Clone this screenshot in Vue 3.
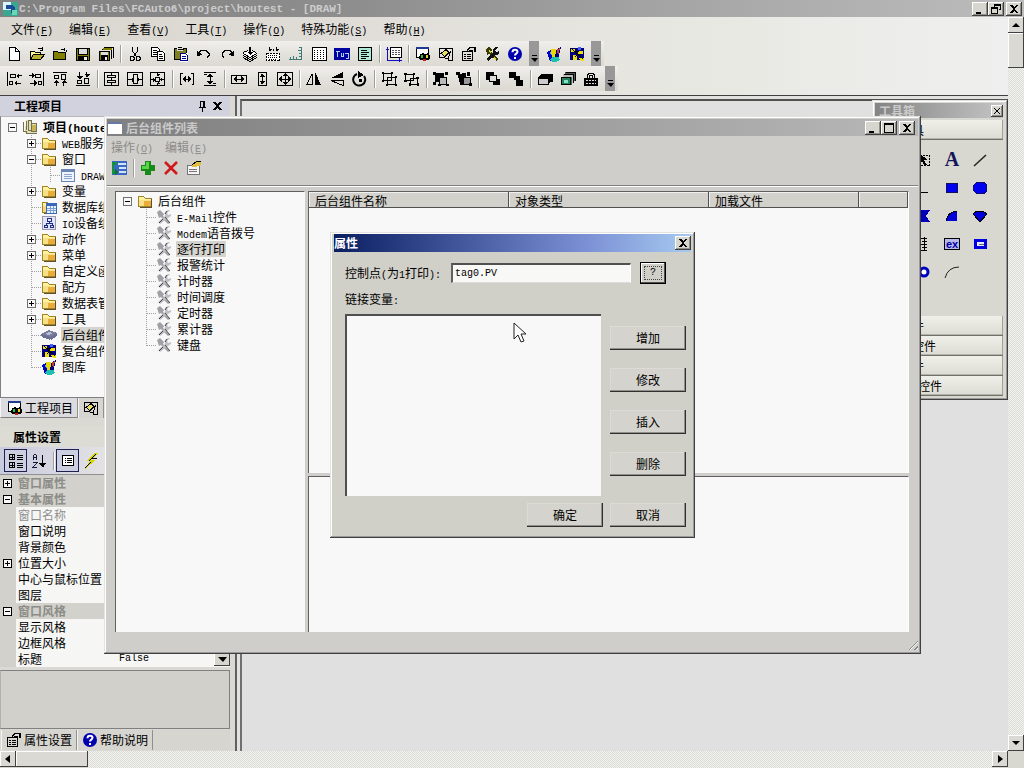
<script setup>
import { h, ref } from 'vue'

// Splits a caption into CJK and Latin runs, "&X" marks an underlined access key.
const Cap = (props) => {
  const runs = props.t.match(/[\x20-\x7e]+|[^\x20-\x7e]+/g) || []
  return h('span', { class: 'cap' }, runs.map((r) => {
    if (!/^[\x20-\x7e]/.test(r)) return r
    const i = r.indexOf('&')
    if (i < 0) return h('span', { class: 'latin' }, r)
    return h('span', { class: 'latin' }, [r.slice(0, i), h('u', r[i + 1]), r.slice(i + 2)])
  }))
}
Cap.props = ['t']

const k = (d, w = 1) => `<path d="${d}" fill="none" stroke="#000" stroke-width="${w}"/>`
const f = (d, c = '#000') => `<path d="${d}" fill="${c}"/>`
const folder = (a, b) => f('M1 3h5l2 2h7v9h-14z', '#a08426') + f('M2 4h4l2 2h6v1h-12z', '#fff3a0') + f('M2 7h12v6h-12z', a) + f('M7 8h7v5h-7z', b) + f('M14 6h1v9h-12v-1h11z', '#5c5030')
const hammer = (c, d) => f('M2 3l3-2 3 3-1 2 7 7-2 2-7-7-2 1z', c) + f('M14 1l-3 3 1 2 3-1v3l-3 1-8 6-2-2 7-6v-4l3-2z', d)
const help = '<circle cx="8" cy="8" r="7" fill="#0000b0" shape-rendering="auto"/><path d="M5.500 6.200q0-2.400 2.500-2.400t2.500 2q0 1.200-1.500 2-1 .6-1 1.800M8 11v2" fill="none" stroke="#fff" stroke-width="2" shape-rendering="auto"/>'
const gallery = f('M1 6l4-2 3 8-4 3z', '#0000c0') + f('M5 3h5v9h-4z', '#e6d800') + f('M10 4l5-3-3 12h-3z', '#000080') + f('M11 3l3-1-2 8z', '#c04040') + f('M6 11h7l1 3-4 2h-4l-2-2z', '#20c0b0') + f('M3 7l2-1 1 4z', '#60a0ff')
const composite = f('M1 2h14v12h-14z', '#000080') + f('M2 3h4v3h-4zM9 5h5v3h-5zM4 9h4v5h-4z', '#f0e000') + f('M1 3l13 9M10 12h5v3h-3z', '#f0e000') + k('M2 2l12 11M6 5h4M9 8l-3 3') + f('M9 1h3v3h-3z', '#4060ff')
const props = k('M1.500 5.500h10v9h-10zM3 8.500h2M6 8.500h4M3 10.500h2M6 10.500h4M3 12.500h2M6 12.500h4') + f('M6 4l4-3h3v3l-4 1z', '#ddd') + k('M6 4.500l3-3h4M8 5l4-1M13.500 1v5') + f('M14 1h1v5h-1z')

const icons = {
  new: f('M3 1h7l4 4v10h-11z', '#fff') + k('M3.500 1.500h6l4 4v9h-10zM9.500 1.500v4h4'),
  open: f('M1 5h4l1 1h6v3h-11z', '#fffb90') + f('M3 9h12l-4 5h-10z', '#b8b030') + k('M1.500 14V5.500h4l1 1h5v2M1.500 13.500l3-5h11l-4 5zM9 2.500h4M13.500 1v4M11 4.500h3'),
  close: f('M1 5h4l1 1h8v8h-13z', '#808000') + k('M1.500 5.500h4l1 1h7v7h-12zM9 3.500h3M12.500 2v3M14.500 4v2'),
  save: f('M1 2h14v13h-14z') + f('M2 3h1v11h-1zM13 3h1v11h-1zM3 9h10v1h-10z', '#808000') + f('M4 3h8v5h-8z', '#ddd') + f('M9 11h3v3h-3z', '#eee'),
  saveall: k('M5.500 1.500h10v10M3.500 3.500h10v9') + f('M5 2h9v2h-9z', '#808000') + f('M1 5h11v10h-11z') + f('M3 6h7v3h-7z', '#ddd') + f('M2 6h1v8h-1zM10 6h1v8h-1z', '#808000') + f('M7 11h2v3h-2z', '#eee'),
  cut: k('M5.500 1v4l4 6M10.500 1v4l-4 6') + k('M4 10.500h2l1 1v2l-1 1h-2l-1-1v-2zM10 10.500h2l1 1v2l-1 1h-2l-1-1v-2z'),
  copy: f('M1 1h8v10h-8z', '#fff') + k('M1.500 1.500h6l2 2v7h-8zM3 4.500h4M3 6.500h4M3 8.500h4') + f('M7 5h8v10h-8z', '#fff') + k('M7.500 5.500h5l2 2v7h-7zM9 8.500h3M9 10.500h4M9 12.500h4'),
  paste: f('M1 2h13v12h-13z', '#808020') + k('M1.500 2.500h12v11h-12z') + f('M4 1h6v4h-6z', '#ddd') + k('M4.500 3.500h6M5 1.500h4') + f('M7 7h8v9h-8z', '#fff') + '<path d="M7.500 7.500h5l2 2v5h-7zM9 10.500h4M9 12.500h4" fill="none" stroke="#000090"/>',
  undo: k('M3 8.500v-2l2-2h5l3 3v2l-2 2') + f('M1 5l6 4-6 1z'),
  redo: k('M13 8.500v-2l-2-2h-5l-3 3v2l2 2') + f('M15 5l-6 4 6 1z'),
  layers: f('M1 8l7-4 7 4-7 4z', '#fff') + k('M1 7.500l7 4 7-4M1 9.500l7 4 7-4M1 11.500l7 4 7-4M1 6.500l5-2M10 4.500l4 2') + f('M7 1h2v5h2l-3 3-3-3h2z'),
  keys: f('M1 7h14v8h-14z', '#fff') + '<path d="M1.500 7.500h13v7h-13z" fill="none" stroke="#000" stroke-dasharray="2 1"/><path d="M3 9.500h10M3 11.500h10M4 13.500h8" stroke="#000" stroke-dasharray="1 1"/>' + k('M4.500 1v4M8 1M11.500 1v4M8.500 3v2') + f('M3 3h4l-2 2zM10 3h4l-2 2z'),
  ruler: '<path d="M1 13.500h12M13.500 1v13M2.500 11v3M5.500 10v4M8.500 11v3M11 10.500h3M11 7.500h3M10 4.500h3M11 1.500h3" fill="none" stroke="#407878"/>',
  grid: f('M1 1h15v14h-15z', '#fff') + k('M1 1.500h14v13h-14z') + [4, 6, 8, 10, 12].map((y) => `<path d="M3 ${y}.500h11" stroke="#000" stroke-dasharray="1 2"/>`).join(''),
  tag: f('M0 2h16v12h-16z', '#0000a0') + '<path d="M1.500 5.500h4M3.500 5v6M7.500 7v3h2v-3M11 7.500h3v5h-2" fill="none" stroke="#a0d8ff"/>',
  script: f('M1 1h14v14h-14z', '#b0e8d8') + k('M1.500 1.500h13v13h-13zM4 4.500h6M4 6.500h8M4 8.500h6M4 10.500h8M4 12.500h5'),
  sheet: f('M4 1h12v11h-12z', '#fff') + k('M4.500 1.500h11v10h-11z') + '<path d="M6 4.500h8M6 6.500h8M6 8.500h8" stroke="#556" stroke-dasharray="2 1"/><path d="M1.500 1v13h14M0 3.500h3M13.500 12v4" fill="none" stroke="#1010c0"/>',
  project: f('M1 1h13v10h-13z', '#fff') + k('M1.500 1.500h12v9M1.500 1v10h4') + f('M1 1h13v2h-13z', '#223a90') + f('M5 8l3-1 2 2v3l-2 2h-3l-1-2z') + f('M6 9h2v3h-2z', '#20c040') + f('M10 8l3-1 2 3v3l-2 1h-3l-1-2z') + f('M11 9h2v3h-2z', '#e8d820') + f('M8 13h3v2h-3z', '#c02020'),
  find: k('M1.500 2.500h13v4M1.500 2v9h5') + f('M3 7l5-4 3 3-4 4z', '#e8e060') + k('M3 7.500l5-4 3 3-4 4zM13 5l-3 7h-3M10.500 12v2h4M14.500 7v7'),
  props,
  tools: hammer('#3a3a00', '#111') + f('M5 4l2 2-1 1-2-2zM10 11l2 2-1 1-2-2z', '#e0d820'),
  help, gallery, composite,
  alLeft: k('M1.500 1v14M4.500 3.500h5v3h-5zM3.500 10.500h3v3h-3z') + k('M11 4.500h5M9 12.500h6') + f('M10 5l3-3v5zM8 12l3-3v6z'),
  alRight: k('M14.500 1v14M6.500 3.500h5v3h-5zM9.500 10.500h3v3h-3z') + k('M0 4.500h5M1 12.500h6') + f('M6 5l-3-3v5zM8 12l-3-3v6z'),
  alTop: k('M1 1.500h14M2.500 4.500h4v3h-4zM9.500 3.500h4v5h-4zM4.500 9v6M11.500 10v5') + f('M1 12l3-3 4 3zM9 12l3-3 3 3z'),
  alBottom: k('M1 14.500h14M2.500 9.500h4v3h-4zM9.500 7.500h4v5h-4zM4.500 1v6M11.500 1v5') + f('M1 5h7l-3 3zM9 3h6l-3 3z'),
  cenH: k('M.5 1.500h14v13h-14zM3.500 4.500h8v2h-8zM3.500 9.500h8v2h-8zM7.500 6v4M7.500 1v3M7.500 12v3'),
  cenV: k('M.5 1.500h15v13h-15zM6.500 3.500h4v9h-4zM1 8.500h5M11 8.500h5') + f('M5 6v5l2-2zM12 6v5l-2-2z'),
  cenB: k('M.5 1.500h14v13h-14zM5.500 6.500h4v4h-4zM7.500 1v4M7.500 12v3M1 8.500h4M11 8.500h4') + f('M6 3h4l-2 2zM6 13h4l-2-2zM3 6v5l2-2zM12 6v5l-2-2z'),
  spH: k('M1.500 2v12M14.500 2v12M1 2.500h3M12 2.500h3M1 13.500h2M13 13.500h2M4 8.500h8') + f('M3 8l4-3v6zM13 8l-4-3v6z'),
  spV: k('M2 1.500h12M2 14.500h12M8.500 3v10M2 3.500h3M11 12.500h3') + f('M8 2l3 4h-6zM8 14l3-4h-6z'),
  szW: k('M.5 4.500h15v8h-15zM3 8.500h10') + f('M2 8l4-3v6zM14 8l-4-3v6z'),
  szH: k('M4.500 1.500h8v13h-8zM8.500 3v10') + f('M8 2l3 4h-5zM8 14l3-4h-5z'),
  szB: k('M.5 1.500h15v13h-15zM3 8.500h10M8.500 3v10') + f('M8 2l3 3h-5zM8 14l3-3h-5zM1 8l4-3v6zM15 8l-4-3v6z'),
  flipH: k('M1 13.500h5V3z') + f('M9 1l6 13h-6z'),
  flipV: f('M14 7V1L2 7z') + k('M2 9.500h12v5z'),
  rotate: '<path d="M5 3a6 6 0 1 0 7 2" fill="none" stroke="#000" stroke-width="2" shape-rendering="auto"/>' + f('M6 0l6 4-6 3zM7 8h3v3h-3z'),
  group: k('M2.500 2.500h8v7h-8zM6.500 6.500h8v7h-8z') + f('M1 1h2v2h-2zM10 1h2v2h-2zM1 9h2v2h-2zM14 5h2v2h-2zM5 13h2v2h-2zM14 13h2v2h-2z'),
  ungroup: k('M1.500 3.500h8v6h-8zM6.500 7.500h7v6h-7z') + f('M0 2h3v2h-3zM9 2h2v2h-2zM0 9h3v2h-3zM12 6h3v2h-3zM5 12h2v3h-2zM13 12h2v3h-2z'),
  combine: f('M2 2h9v9h-9z') + f('M6 6h8v8h-8z', '#bbb') + k('M6.500 6.500h7v7h-7z') + f('M0 1h3v3h-3zM12 1h3v3h-3zM0 11h3v3h-3zM13 13h3v2h-3zM5 13h3v2h-3z'),
  split: f('M2 3l8-1 1 8-8 1z') + f('M8 7h6v6h-6z', '#999') + k('M7.500 6.500h7v7h-7z') + f('M0 1h4v3h-4zM11 1h3v4h-3zM4 11h4v3h-4zM13 12h3v3h-3z'),
  front: f('M1 1h8v8h-8zM8 8h7v6h-7z') + f('M4 4h8v7h-8z', '#ddd') + k('M4.500 4.500h7v6h-7z'),
  back: f('M1 1h7v6h-7zM8 9h7v6h-7z') + f('M6 5h6v6h-6z', '#000') + f('M5 9h3v2h-3z', '#ddd'),
  stack: f('M4 3h12v8h-3l-1 3h-11V7z') + f('M2 8h9v5h-9z', '#ccc') + k('M4 4.500h11'),
  stackG: f('M5 1h11v9h-11z', '#555') + k('M5.500 1.500h10v8') + f('M3 3h10v9h-10z', '#bbb') + k('M3.500 3.500h10v8') + f('M1 6h11v8h-11z', '#208060') + k('M1.500 6.500h9v7h-9z') + f('M4 9h4v3h-4z', '#80e0c0'),
  lock: k('M4.500 8V4l2-2h3l2 2v4') + k('M6.500 7V4h3v3') + f('M1 7h14v8h-14z') + '<path d="M3 9.500h10M3 12.500h10" stroke="#ddd" stroke-dasharray="2 1"/>',
  folder: folder('#f8e088', '#e8ac38'),
  root: f('M4 1h5v3h6v10h-12z', '#e6dfa8') + f('M9 6h5v7h-5z', '#c8b458') + '<path d="M4.500 2v9M6.500 1.500h3v10h-3zM9.500 4.500h5v8h-5zM1 12.500h3v2h11M1.500 3v10" fill="none" stroke="#70705c"/>',
  form: f('M1 2h14v13h-14z', '#6b85b5') + f('M2 5h12v9h-12z', '#eef4ff') + '<path d="M4 7.500h8M4 9.500h8M4 11.500h8" stroke="#8fa5c8"/>',
  db: folder('#f4d880', '#f0c860') + f('M5 4h11v11h-11z', '#3968b8') + f('M6 7h9v7h-9z', '#e8f2ff') + '<path d="M6 9.500h9M6 11.500h9M9.500 7v7M12.500 7v7" stroke="#7c9fd0"/>',
  io: f('M1 1h14v14h-14z', '#dfe4f8') + '<path d="M1.500 1.500h13v13h-13z" fill="none" stroke="#99a"/>' + '<path d="M6.500 3.500h4v3h-4zM3.500 10.500h3v2h-3zM9.500 10.500h3v2h-3zM8.500 7v2M5 10v-1.500h6v1.500" fill="none" stroke="#203080"/>',
  chip: f('M0 7l8-4 8 3-7 4z', '#777c9c') + f('M0 7l9 3v3l-8-3zM9 10l7-4v3l-6 4z', '#6c6f92') + f('M4 7l4-2 4 1-4 2z', '#b8bcd8'),
  tool: '<g shape-rendering="auto">' + f('M1 3l3-2 4 4-1 2 7 7-2 1-7-7-2 1z', '#a0a0a6') + f('M14 1l-3 3 1 2 3-1v2l-3 2-8 6-2-2 7-6v-4l3-2z', '#c0c0c4') + '<path d="M3 14l4-4M9 8l5 6M9 5l2-3" fill="none" stroke="#444"/></g>',
  tree: f('M1 1h15v14h-15z', '#3a68c0') + f('M7 3h8v2h-8zM8 7h7v2h-7zM8 11h7v2h-7z', '#d0e4ff') + f('M1 2h5v3h-3v6h3v3h-5z', '#109040') + f('M4 9l4 3-4 3z', '#107030'),
  plus: f('M5 1h6v4h4v6h-4v4h-6v-4h-4v-6h4z', '#178a17') + f('M6 2h3v4h-3zM2 6h7v3h-7z', '#56d44a'),
  cross: '<path d="M2 2l12 12M14 2L2 14" stroke="#d01818" stroke-width="2.500" shape-rendering="auto"/>',
  edit: f('M1 5h12v10h-12z', '#f4f4f4') + '<path d="M1.500 5.500h12v9h-12zM3 9.500h8M3 11.500h8" fill="none" stroke="#777"/>' + f('M6 4l4-3h5v4l-5 2h-4z', '#e0c040') + k('M6.500 4.500l4-3h4'),
  cat: k('M1.500 1.500h5v5h-5zM1.500 9.500h5v5h-5zM4.500 2v4M2 4.500h5M4.500 10v4M2 12.500h5M9 2.500h6M9 4.500h6M9 6.500h6M9 10.500h6M9 12.500h6M9 14.500h6'),
  sort: '<path d="M2.500 7V3l1-2h1l1 2v4M2.500 4.500h3M2 9.500h4l-4 5h4" fill="none" stroke="#181838"/>' + k('M11.500 2v10') + f('M8 10h7l-3 5z'),
  list: f('M2 2h12v11h-12z', '#fff') + k('M2.500 2.500h11v10h-11zM5 5.500h1M7 5.500h5M5 7.500h1M7 7.500h5M5 9.500h1M7 9.500h5'),
  bolt: f('M12 0l-9 8h4l-5 8 11-9h-4l6-7z', '#d8d800') + k('M13 1l-7 7M14 5.500h-5M8 9l-6 6'),
  app: f('M0 1h15v14h-15z', '#3aa890') + f('M0 1h8v8h-8z', '#d8f4ff') + f('M3 4h6l3 3v5h-4v-4h-5z', '#1c4a9a') + f('M9 9h5v5h-5z', '#67d8b8'),
  win: f('M0 2h14v12h-14z', '#fff') + f('M0 2h14v2h-14z', '#6878a0'),
  pick: '<path d="M3.500 3.500h10v10h-10z" fill="none" stroke="#000" stroke-dasharray="2 1"/>' + f('M3 1v11l3-3 3 5 2-1-3-5h4z'),
  letter: '<text x="8" y="14" text-anchor="middle" font-family="Liberation Serif, serif" font-weight="bold" font-size="20" fill="#15155c">A</text>',
  line: '<path d="M2 14L14 3" stroke="#222" stroke-width="1.500" shape-rendering="auto"/>',
  hline: k('M0 12.500h12'),
  rect: f('M2 3h12v10h-12z', '#10105c') + f('M3 4h10v8h-10z', '#0000f0'),
  rrect: f('M4 2h8l3 3v6l-3 3h-8l-3-3v-6z', '#10106c') + f('M4 3h8l2 2v6l-2 2h-8l-2-2v-6z', '#0000f0'),
  poly: f('M0 2h14l-4 6 4 6h-14z', '#0000b8'),
  quarter: f('M2 13q0-9 11-10v10z', '#0000d8') + k('M2.500 13q0-9 11-10'),
  fan: f('M1 6l4-3h6l4 3-7 8z', '#0000d8') + k('M1 6l4-3h6l4 3-7 8z'),
  scale: k('M8.500 1v14M3 2.500h8M6 5.500h5M3 8.500h8M6 11.500h5M3 14.500h8'),
  ex: f('M0 2h16v12h-16z', '#b8b8ec') + k('M.5 2.500h15v11h-15z') + '<text x="8" y="12" text-anchor="middle" font-family="Liberation Sans, sans-serif" font-weight="bold" font-size="11" fill="#0000a0">ex</text>',
  btn: f('M2 3h13v10h-13z', '#0000e0') + f('M5 6h7v4h-7z', '#e8e8ff') + f('M7 8h5v1h-5z', '#666'),
  ring: '<circle cx="8" cy="8" r="4" fill="#fff" stroke="#0000c0" stroke-width="3" shape-rendering="auto"/>',
  arc: '<path d="M1 14Q4 3 15 3" fill="none" stroke="#222" shape-rendering="auto"/>',
  blank: '',
}
const Ico = (p) => h('svg', { class: 'ico', viewBox: '0 0 16 16', width: 16, height: 16, 'shape-rendering': 'crispEdges', 'aria-hidden': 'true', innerHTML: icons[p.n] })
Ico.props = ['n']

const menus = ['文件(&F)', '编辑(&E)', '查看(&V)', '工具(&T)', '操作(&O)', '特殊功能(&S)', '帮助(&H)']
const bar1 = 'new open close save saveall | cut copy paste undo redo layers keys ruler grid tag script | sheet | project find props tools help > gallery composite >'.split(' ')
const bar2 = 'alLeft alRight alTop alBottom | cenH cenV cenB | spH spV | szW szH szB | flipH flipV rotate | group ungroup | combine split | front back | stack stackG lock >'.split(' ')

// e: expander sign, d: depth, i: icon
const projectTree = [
  { d: 0, e: '-', i: 'root', t: '项目(houtest)', bold: true },
  { d: 1, e: '+', i: 'folder', t: 'WEB服务' },
  { d: 1, e: '-', i: 'folder', t: '窗口' },
  { d: 2, i: 'form', t: 'DRAW' },
  { d: 1, e: '+', i: 'folder', t: '变量' },
  { d: 1, i: 'db', t: '数据库组' },
  { d: 1, i: 'io', t: 'IO设备组' },
  { d: 1, e: '+', i: 'folder', t: '动作' },
  { d: 1, e: '+', i: 'folder', t: '菜单' },
  { d: 1, i: 'folder', t: '自定义函数' },
  { d: 1, i: 'folder', t: '配方' },
  { d: 1, e: '+', i: 'folder', t: '数据表管理' },
  { d: 1, e: '+', i: 'folder', t: '工具' },
  { d: 1, i: 'chip', t: '后台组件', sel: true },
  { d: 1, i: 'composite', t: '复合组件' },
  { d: 1, i: 'gallery', t: '图库', last: true },
]
const componentTree = [
  { d: 0, e: '-', i: 'folder', t: '后台组件' },
  ...['E-Mail控件', 'Modem语音拨号', '逐行打印', '报警统计', '计时器', '时间调度', '定时器', '累计器', '键盘'].map((t, n) => ({ d: 1, i: 'tool', t, sel: n === 2, last: n === 8 })),
]
const grid = [
  { t: '窗口属性', e: '+', cat: true }, { t: '基本属性', e: '-', cat: true },
  { t: '窗口名称', off: true }, { t: '窗口说明' }, { t: '背景颜色' }, { t: '位置大小', e: '+' },
  { t: '中心与鼠标位置' }, { t: '图层' }, { t: '窗口风格', e: '-', cat: true },
  { t: '显示风格' }, { t: '边框风格' }, { t: '标题', v: true },
]
const shapes = ['pick', 'letter', 'line', 'hline', 'rect', 'rrect', 'poly', 'quarter', 'fan', 'scale', 'ex', 'btn', 'ring', 'arc', 'blank']
const columns = ['后台组件名称', '对象类型', '加载文件', '']
const point = ref('tag0.PV')
</script>

<template>
  <div class="screen">
    <header class="titlebar main-title">
      <Ico n="app" />
      <span class="main-caption">C:\Program Files\FCAuto6\project\houtest - [DRAW]</span>
      <div class="winbtns">
        <button class="wb" aria-label="最小化"><svg viewBox="0 0 12 10"><path d="M2 8h5v2h-5z" /></svg></button>
        <button class="wb" aria-label="还原"><svg viewBox="0 0 12 10"><path d="M4 0h7v6h-2v-1h1v-3h-5v1h-1zM1 3h7v7h-7zM2 5v4h5v-4z" fill-rule="evenodd" /></svg></button>
        <button class="wb gap" aria-label="关闭"><svg viewBox="0 0 12 10"><path d="M2 1h2l2 2 2-2h2l-3 4 3 4h-2l-2-2-2 2h-2l3-4z" /></svg></button>
      </div>
    </header>

    <div class="work">
      <div class="frame">
        <div class="chrome">
          <nav class="menubar"><button v-for="m in menus" :key="m"><Cap :t="m" /></button></nav>
          <div v-for="(bar, b) in [bar1, bar2]" :key="b" class="toolbar">
            <template v-for="(n, i) in bar" :key="i">
              <span v-if="n === '|'" class="sep"></span>
              <button v-else-if="n === '>'" class="more" aria-label="更多"><svg viewBox="0 0 9 8"><path d="M2 0h5v1h-5zM1 3h7l-3 4z" /></svg></button>
              <button v-else class="tb" :aria-label="n"><Ico :n="n" /></button>
            </template>
          </div>
        </div>

        <div class="body">
          <aside class="dock">
            <div class="dock-head lilac"><Cap t="工程项目" />
              <svg class="pins" viewBox="0 0 30 12" shape-rendering="crispEdges"><path d="M8 1h5v6h1v1h-3v4h-1v-4h-3v-1h1zM9 2v5h2v-5z" fill-rule="evenodd" /><path d="M22 2l7 8M29 2l-7 8" stroke="#000" stroke-width="2" /></svg>
            </div>
            <ul class="tree project">
              <li v-for="r in projectTree" :key="r.t" :class="{ last: r.last, sel: r.sel, bold: r.bold }">
                <span v-for="n in r.d + 1" :key="n" class="cell" :class="{ end: n === r.d + 1, first: n === 1, on: n === 2 }"><b v-if="r.e && n === r.d + 1" class="exp" :class="{ plus: r.e === '+' }"></b></span>
                <Ico :n="r.i" /><Cap :t="r.t" />
              </li>
            </ul>
            <div class="tabs"><button class="on"><Ico n="project" /><Cap t="工程项目" /></button><button><Ico n="find" /></button></div>
            <div class="dock-head lower"><Cap t="属性设置" /></div>
            <div class="prop-tools">
              <button class="on" aria-label="分类"><Ico n="cat" /></button><button aria-label="排序"><Ico n="sort" /></button><span class="sep"></span>
              <button class="on" aria-label="属性"><Ico n="list" /></button><button aria-label="事件"><Ico n="bolt" /></button>
            </div>
            <table class="props">
              <tbody>
                <tr v-for="g in grid" :key="g.t" :class="{ cat: g.cat, off: g.off }">
                  <td class="gut"><b v-if="g.e" class="exp" :class="{ plus: g.e === '+' }"></b></td>
                  <th scope="row">{{ g.t }}</th>
                  <td class="val">
                    <div v-if="g.v" class="combo">
                      <select aria-label="标题"><option>False</option><option>True</option></select>
                      <span class="arrow"><svg viewBox="0 0 9 6" width="9" height="6"><path d="M0 1h9l-4 5z" /></svg></span>
                    </div>
                  </td>
                </tr>
              </tbody>
            </table>
            <div class="hint"></div>
            <div class="tabs foot"><button><Ico n="props" /><Cap t="属性设置" /></button><button><Ico n="help" /><Cap t="帮助说明" /></button></div>
          </aside>
          <main class="mdi"><div class="canvas"></div></main>
        </div>

        <div class="hscroll">
          <button aria-label="向左"><svg viewBox="0 0 8 8"><path d="M6 0v8l-5-4z" /></svg></button><span class="thumb"></span><span class="track"></span>
          <button aria-label="向右"><svg viewBox="0 0 8 8"><path d="M2 0v8l5-4z" /></svg></button>
        </div>
      </div>
      <div class="vscroll">
        <button aria-label="向上"><svg viewBox="0 0 8 8"><path d="M0 6h8l-4-4z" /></svg></button><span class="thumb"></span><span class="track"></span>
        <button aria-label="向下"><svg viewBox="0 0 8 8"><path d="M0 2h8l-4 4z" /></svg></button><span class="corner"></span>
      </div>
    </div>

    <section class="window toolbox">
      <div class="titlebar"><span class="inactive">工具箱</span><button class="wb" aria-label="关闭"><svg viewBox="0 0 12 10"><path d="M2 1h1l3 3 3-3h1l-3 4 3 4h-1l-3-3-3 3h-1l3-4z" /></svg></button></div>
      <button class="drawer"><Cap t="常用工具" /></button>
      <div class="shapes"><button v-for="s in shapes" :key="s" :aria-label="s"><Ico :n="s" /></button></div>
      <button v-for="t in ['图表控件', 'Active控件', '报表控件', 'Windows控件']" :key="t" class="drawer"><Cap :t="t" /></button>
    </section>

    <section class="window components">
      <div class="titlebar"><Ico n="win" /><span class="inactive">后台组件列表</span>
        <div class="winbtns">
          <button class="wb" aria-label="最小化"><svg viewBox="0 0 12 10"><path d="M2 8h5v2h-5z" /></svg></button>
          <button class="wb" aria-label="最大化"><svg viewBox="0 0 12 10"><path d="M1 0h10v10h-10zM2 2v7h8v-7z" fill-rule="evenodd" /></svg></button>
          <button class="wb gap" aria-label="关闭"><svg viewBox="0 0 12 10"><path d="M2 1h2l2 2 2-2h2l-3 4 3 4h-2l-2-2-2 2h-2l3-4z" /></svg></button>
        </div>
      </div>
      <nav class="submenu"><button><Cap t="操作(&O)" /></button><button><Cap t="编辑(&E)" /></button></nav>
      <div class="subtools">
        <button aria-label="列表"><Ico n="tree" /></button><span class="sep"></span>
        <button aria-label="增加"><Ico n="plus" /></button><button aria-label="删除"><Ico n="cross" /></button><button aria-label="属性"><Ico n="edit" /></button>
      </div>
      <div class="panes">
        <ul class="tree comp">
          <li v-for="r in componentTree" :key="r.t" :class="{ last: r.last, sel: r.sel }">
            <span v-for="n in r.d + 1" :key="n" class="cell" :class="{ end: n === r.d + 1, first: n === 1 }"><b v-if="r.e && n === r.d + 1" class="exp"></b></span>
            <Ico :n="r.i" /><Cap :t="r.t" />
          </li>
        </ul>
        <div class="right">
          <div class="listview"><table><thead><tr><th v-for="c in columns" :key="c" scope="col">{{ c }}</th></tr></thead></table></div>
          <div class="detail"></div>
        </div>
      </div>
      <div class="grip"></div>
    </section>

    <section class="window dialog" role="dialog" aria-label="属性">
      <div class="titlebar"><span>属性</span><button class="wb" aria-label="关闭"><svg viewBox="0 0 12 10"><path d="M2 1h2l2 2 2-2h2l-3 4 3 4h-2l-2-2-2 2h-2l3-4z" /></svg></button></div>
      <form class="form" @submit.prevent>
        <div class="line"><label for="point"><Cap t="控制点(为1打印):" /></label><input id="point" v-model="point" type="text" /><button type="button" class="q"><span>?</span></button></div>
        <span id="vars" class="vars"><Cap t="链接变量:" /></span>
        <div class="cols">
          <div class="listbox" role="listbox" aria-labelledby="vars" tabindex="0"></div>
          <div class="side"><button v-for="t in ['增加', '修改', '插入', '删除']" :key="t" type="button" class="push">{{ t }}</button></div>
        </div>
        <div class="actions"><button class="push">确定</button><button type="button" class="push">取消</button></div>
      </form>
    </section>

    <svg class="pointer" viewBox="0 0 14 22" width="14" height="22"><path d="M1 1v16l4-4 3 7 3-1-3-7h5z" fill="#fff" stroke="#222" /></svg>
  </div>
</template>

<style>
html, body { margin: 0; overflow: hidden; }
.cap { white-space: nowrap; }
.latin { font-family: "Liberation Mono", monospace; font-size: 10px; line-height: 10px; }
.ico { display: block; flex: none; }
</style>

<style scoped>
.screen { position: relative; display: flex; flex-direction: column; height: 100vh; overflow: hidden; background: #d6d5ce; color: #000; font: 12px/16px "Noto Sans CJK SC", sans-serif; }
button { margin: 0; padding: 0; border: 0; background: none; color: inherit; font: inherit; display: flex; align-items: center; }
.titlebar { display: flex; align-items: center; }
.titlebar > .winbtns, .titlebar > .wb { margin-left: auto; }
.winbtns { display: flex; }
.wb { width: 16px; height: 14px; justify-content: center; background: #d6d5ce; box-shadow: inset -1px -1px #404040, inset 1px 1px #fff, inset -2px -2px #909088; }
.wb svg { width: 12px; height: 10px; shape-rendering: crispEdges; }
.wb.gap { margin-left: 2px; }
.inactive { color: #cacaca; font-weight: bold; }

.main-title { flex: none; height: 17px; padding: 0 2px 0 3px; background: linear-gradient(90deg, #808080, #8e8e8e 35%, #a8a8a8 70%, #bcbcbc); }
.main-caption { color: #cccccc; font: bold 11px/16px "Liberation Mono", monospace; white-space: pre; }

.work { flex: 1; min-height: 0; display: flex; }
.frame { flex: 1; min-width: 0; display: flex; flex-direction: column; }
.chrome { flex: none; background: linear-gradient(90deg, #d8d6ce, #e0ddd8 35%, #e8e8e2 70%, #efefef); border-bottom: 1px solid #404040; padding-bottom: 4px; }
.menubar { display: flex; height: 24px; padding-left: 11px; gap: 16px; }
.toolbar { display: flex; align-items: center; height: 25px; padding-left: 2px; width: max-content; background: linear-gradient(#f0efec, #e2e0da 60%, #dbd9d2); }
.tb { width: 23px; height: 22px; justify-content: center; }
.sep { flex: none; width: 1px; height: 18px; margin: 0 2px 0 3px; background: #a0a098; box-shadow: 1px 0 #fff; }
.more { width: 10px; height: 25px; margin: 0 3px; background: #989898; justify-content: center; align-items: flex-end; padding-bottom: 3px; }
.more svg { width: 9px; height: 8px; }

.body { flex: 1; min-height: 0; display: flex; }
.dock { width: 230px; flex: none; padding-right: 5px; display: flex; flex-direction: column; background: #dad9d3; }
.dock-head { flex: none; height: 20px; line-height: 20px; padding: 0 8px 0 14px; font-weight: bold; display: flex; align-items: center; justify-content: space-between; }
.lilac { background: #d2d2de; }
.pins { width: 30px; height: 12px; }
.lower { margin-top: 7px; padding-left: 13px; background: #dddcd4; }
.tree { list-style: none; margin: 0; background: #f8f8f8; }
.project { flex: 1; min-height: 0; overflow: hidden; padding: 2px 0 0 2px; border-left: 1px solid #808080; border-top: 1px solid #b8b8b8; border-bottom: 1px solid #808080; }
.tree li { display: flex; align-items: center; height: 16px; }
.tree li .cap { height: 16px; padding: 0 1px; margin-left: 4px; line-height: 16px; }
.sel .cap { background: #d4d3cd; }
.bold { font-weight: bold; }
.bold :deep(.latin) { font-size: 11px; }
.cell { flex: none; position: relative; width: 19px; height: 16px; }
.cell.end:not(.first) { background: repeating-linear-gradient(90deg, #a0a0a0 0 1px, transparent 1px 2px) 10px 8px / 9px 1px no-repeat, repeating-linear-gradient(#a0a0a0 0 1px, transparent 1px 2px) 9px 0 / 1px 16px no-repeat; }
.cell.on:not(.end) { background: repeating-linear-gradient(#a0a0a0 0 1px, transparent 1px 2px) 9px 0 / 1px 16px no-repeat; }
.last .cell.end:not(.first) { background-size: 9px 1px, 1px 9px; }
.exp { position: absolute; left: 5px; top: 4px; width: 9px; height: 9px; box-sizing: border-box; border: 1px solid #707070; background: linear-gradient(#000, #000) 1px 3px / 5px 1px no-repeat, #f8f8f8; }
.exp.plus { background: linear-gradient(#000, #000) 1px 3px / 5px 1px no-repeat, linear-gradient(#000, #000) 3px 1px / 1px 5px no-repeat, #f8f8f8; }
.tabs { flex: none; display: flex; height: 20px; margin-bottom: 2px; background: #d6d5d0; }
.tabs button { gap: 2px; padding: 0 4px; border-right: 1px solid #909090; border-left: 1px solid #f4f4f4; }
.tabs button.on { padding-left: 6px; background: #dcdbe0; border-bottom: 1px solid #808080; }
.prop-tools { flex: none; display: flex; align-items: center; height: 27px; padding-left: 4px; background: linear-gradient(90deg, #c8cade, #ebe9e6 60%); border-bottom: 1px solid #909090; }
.prop-tools button { width: 23px; height: 23px; box-sizing: border-box; justify-content: center; }
.prop-tools .on { border: 1px solid #202050; background: #cccfe0; }
.props { flex: none; width: 100%; border-collapse: collapse; table-layout: fixed; background: #f6f6f4; }
.props td, .props th { height: 16px; padding: 0; line-height: 16px; white-space: nowrap; }
.props th { width: 100px; padding-left: 2px; box-sizing: border-box; font-weight: normal; text-align: left; }
.props .gut { width: 16px; position: relative; background: #d2d1cb; }
.gut .exp { left: 3px; border-color: #000; }
.cat { background: #d2d1cb; }
.cat th { color: #8c8c88; font-weight: bold; }
.off th { color: #909090; }
.combo { display: flex; height: 14px; margin: 1px 0; }
.combo select { flex: 1; min-width: 0; height: 14px; padding: 0 0 0 3px; border: 0; appearance: none; background: transparent; font: 10px/14px "Liberation Mono", monospace; color: #000; }
.arrow { width: 16px; display: flex; align-items: center; justify-content: center; background: #d6d5ce; box-shadow: inset -1px -1px #404040, inset 1px 1px #fff; pointer-events: none; }
.hint { flex: none; height: 57px; margin-top: 3px; background: #d1d0ca; border: 1px solid #808080; border-left-color: #b0b0b0; }
.foot { height: 20px; margin: 1px 0 1px 1px; }
.mdi { flex: 1; min-width: 0; padding: 3px 0 0 3px; background: #e2e2e0; border-left: 2px solid #606060; }
.canvas { height: 100%; box-sizing: border-box; background: #e0e0e0; border-top: 2px solid #505050; border-left: 2px solid #707070; }

.hscroll, .vscroll { flex: none; display: flex; }
.vscroll { flex-direction: column; width: 16px; }
.hscroll { height: 17px; }
.hscroll button, .vscroll button, .thumb { flex: none; width: 16px; height: 16px; justify-content: center; background: #dad9d3; box-shadow: inset -1px -1px #404040, inset 1px 1px #fff; }
.hscroll svg, .vscroll svg { width: 8px; height: 8px; }
.hscroll .thumb { width: 72px; }
.vscroll .thumb { height: 35px; }
.track { flex: 1; background: repeating-conic-gradient(#dcdcd6 0 25%, #f2f2ee 0 50%) 0 0 / 2px 2px; }
.corner { height: 17px; background: #d8d7d0; }

.window { position: absolute; box-sizing: border-box; display: flex; flex-direction: column; background: #d2d1cb; box-shadow: inset -1px -1px #404040, inset 1px 1px #e2e2de, inset -2px -2px #999, inset 2px 2px #fff; }
.toolbox { left: 872px; top: 100px; width: 136px; height: 300px; padding: 3px 5px 4px 3px; background: #d8d8d0; }
.toolbox .titlebar { height: 15px; margin-bottom: 2px; padding-left: 4px; background: linear-gradient(90deg, #848484, #c4c4c4); }
.toolbox .titlebar .wb { width: 12px; height: 12px; }
.toolbox .titlebar .wb svg { width: 10px; height: 8px; }
.drawer { flex: none; height: 20px; box-sizing: border-box; padding-left: 1px; background: linear-gradient(#f0f0ea, #dcdbd3); border-bottom: 1px solid #707068; box-shadow: inset -1px 0 #a0a098, inset 0 -1px #b4b3ac; }
.shapes { flex: 1; display: grid; grid-template-columns: repeat(3, 28px); grid-auto-rows: 28px; align-content: start; padding: 6px 0 0 35px; }
.shapes button { justify-content: center; }

.components { left: 104px; top: 116px; width: 817px; height: 538px; padding: 3px; background: #cfceca; }
.components > .titlebar { flex: none; height: 17px; padding: 0 3px 0 1px; background: linear-gradient(90deg, #808080, #949494 40%, #b8b8b8); }
.components > .titlebar .inactive { margin-left: 2px; }
.submenu { flex: none; display: flex; gap: 12px; height: 22px; padding-left: 4px; color: #8c8c88; }
.subtools { flex: none; display: flex; align-items: center; height: 28px; margin-bottom: 5px; padding: 0; box-sizing: border-box; border-bottom: 1px solid #808080; box-shadow: 0 1px #fff; }
.subtools button { width: 23px; justify-content: center; padding-bottom: 8px; }
.subtools .sep { margin: 0 2px 8px 3px; }
.panes { flex: 1; min-height: 0; display: flex; gap: 3px; margin: 0 9px 0 8px; }
.comp { width: 186px; flex: none; padding: 1px 0 0 2px; box-sizing: content-box; border: 1px solid #606060; border-width: 1px 0 0 1px; border-right: 1px solid #f8f8f8; background: #f8f8f8; }
.right { flex: 1; min-width: 0; display: grid; grid-template-rows: 281fr 155fr; gap: 3px; }
.listview, .detail { background: #f8f8f8; border: 1px solid #606060; border-right: 1px solid #fff; border-bottom: 0; min-height: 0; }
.listview table { width: 100%; table-layout: fixed; border-collapse: separate; border-spacing: 0; }
.listview th { height: 16px; padding: 0 0 0 6px; font-weight: normal; text-align: left; line-height: 15px; background: #d2d1cb; box-shadow: inset -1px -1px #505050, inset 1px 1px #f0f0f0; }
.listview th:nth-child(-n+2) { width: 194px; }
.listview th:nth-child(3) { width: 144px; }
.grip { flex: none; align-self: flex-end; width: 12px; height: 12px; margin: 6px 0 1px; background: repeating-linear-gradient(135deg, transparent 0 2px, #888 2px 3px, #f4f4f4 3px 4px); clip-path: polygon(100% 0, 100% 100%, 0 100%); }

.dialog { left: 330px; top: 232px; width: 365px; height: 306px; padding: 2px 4px; background: #d0cfc8; }
.dialog .titlebar { flex: none; height: 18px; padding: 0; color: #fff; font-weight: bold; background: linear-gradient(90deg, #0a1f62, #7a8fd4 70%, #a6caf0); }
.form { flex: 1; display: flex; flex-direction: column; padding: 9px 5px 0 11px; }
.line { display: flex; align-items: center; height: 23px; }
.line label { width: 106px; flex: none; }
.line input { flex: none; width: 180px; height: 20px; box-sizing: border-box; padding: 0 2px; border: 1px solid #fff; border-top: 2px solid #505050; border-left: 2px solid #606060; border-bottom-color: #ddd; background: #f8f8f6; font: 10px/16px "Liberation Mono", monospace; outline: 0; }
.q { width: 26px; height: 22px; margin-left: 9px; box-sizing: border-box; padding: 3px; border: 1px solid #000; box-shadow: inset -1px -1px #505050, inset 1px 1px #fff; }
.q span { flex: 1; border: 1px dotted #444; font: 10px/12px "Liberation Mono", monospace; text-align: center; }
.vars { margin-top: 7px; height: 23px; }
.cols { display: flex; gap: 9px; }
.listbox { flex: 1; height: 182px; box-sizing: border-box; background: #f8f8f8; border-top: 2px solid #505050; border-left: 2px solid #505050; outline: 0; }
.side { display: flex; flex-direction: column; gap: 18px; padding-top: 12px; }
.push { width: 76px; height: 24px; justify-content: center; background: #d4d3cd; box-shadow: inset -1px -1px #303030, inset -2px -2px #909088, inset 1px 1px #dcdbd5; }
.actions { display: flex; justify-content: flex-end; gap: 7px; margin-top: 7px; }
.pointer { position: absolute; left: 513px; top: 322px; pointer-events: none; }
</style>
